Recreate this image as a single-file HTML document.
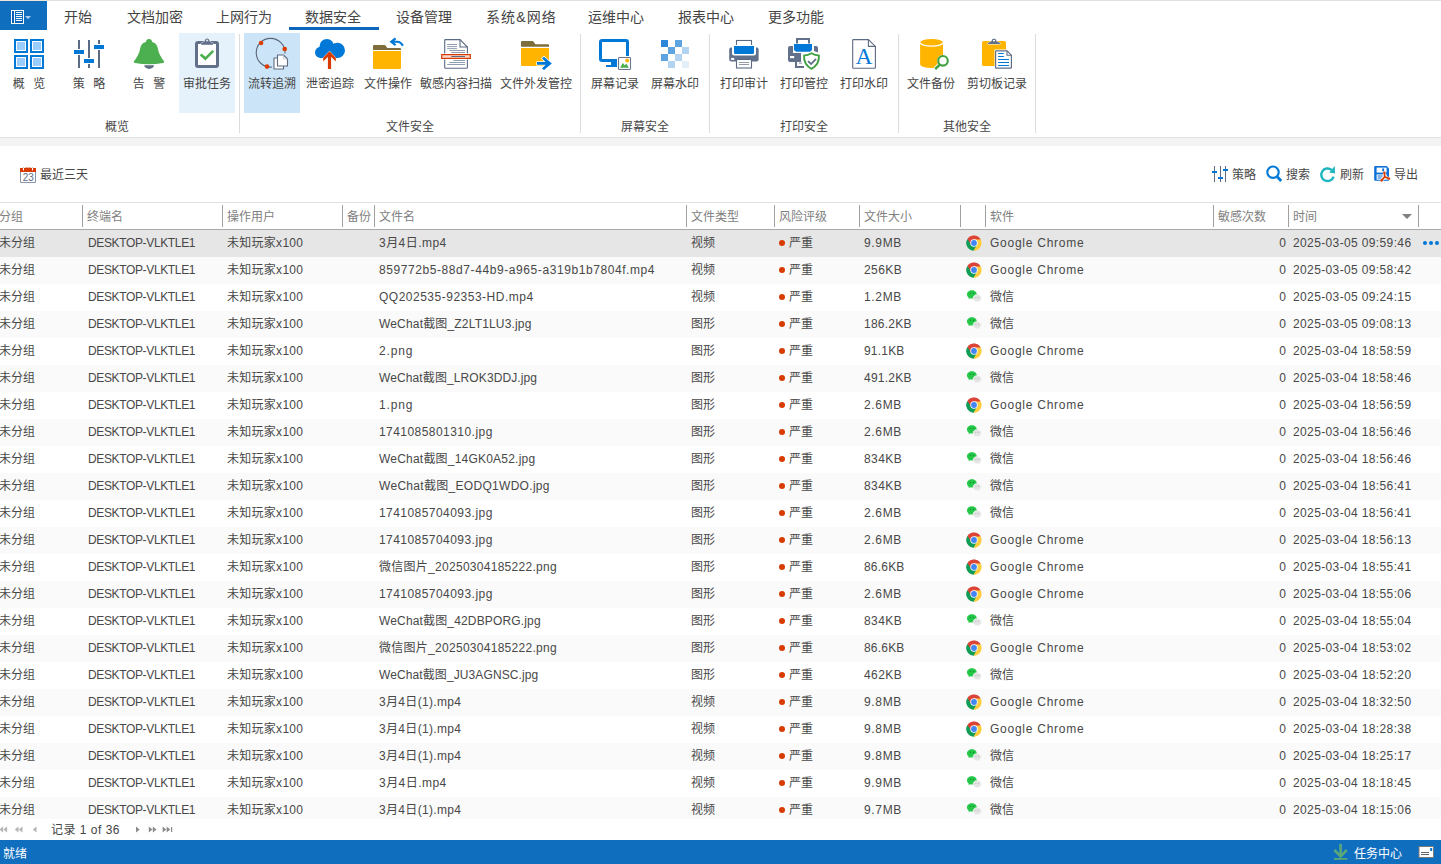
<!DOCTYPE html>
<html lang="zh-CN"><head><meta charset="utf-8"><title>数据安全 - 流转追溯</title>
<style>
*{margin:0;padding:0;box-sizing:border-box}
html,body{width:1441px;height:864px;overflow:hidden;background:#fff}
body{position:relative;font-family:"Liberation Sans","Noto Sans CJK SC",sans-serif;font-size:12px;color:#484848}
i{font-style:normal}
#tabbar{position:absolute;left:0;top:0;width:1441px;height:30px;background:#fff;border-top:1px solid #e1e1e1}
#appbtn{position:absolute;left:0;top:0;width:47px;height:29px;background:#106ebe}
#appbtn svg{position:absolute;left:0;top:0}
.tab{position:absolute;top:1px;height:30px;line-height:30px;font-size:14px;color:#444;white-space:nowrap}
#tabline{position:absolute;left:289px;top:26px;width:90px;height:3px;background:#0b66bd}
#ribbon{position:absolute;left:0;top:30px;width:1441px;height:108px;background:#fff;border-bottom:1px solid #e1e1e1}
#ribsvg{position:absolute;left:0;top:-30px}
.rb{position:absolute;top:3px;height:80px}
.rb.hov{background:#e5f1fb}.rb.sel{background:#cce4f7}
.btn{position:absolute;top:0;width:100px;height:84px;text-align:center}
.btn .lb{position:absolute;left:0;top:45px;width:100px;line-height:18px;font-size:12px;white-space:nowrap;color:#444}
.grp{position:absolute;top:88px;width:100px;text-align:center;line-height:18px;font-size:12px;color:#484848}
.gsep{position:absolute;top:4px;width:1px;height:99px;background:#dcdcdc}
#band{position:absolute;left:0;top:138px;width:1441px;height:8px;background:#f3f3f3}
#toolbar{position:absolute;left:0;top:146px;width:1441px;height:56px;background:#fff}
#tbsvg{position:absolute;left:0;top:0}
.tb{position:absolute;top:20px;height:18px}
.tb span{position:absolute;top:0;line-height:18px;white-space:nowrap;font-size:12px;color:#484848}
#ghead{position:absolute;left:0;top:202px;width:1441px;height:28px;background:#fff;border-top:1px solid #e2e2e2;border-bottom:1px solid #a8a8a8}
.hs{position:absolute;top:2px;width:1px;height:22px;background:#a0a0a0}
.ht{position:absolute;top:5px;line-height:18px;color:#808080;white-space:nowrap}
.sort{position:absolute;left:1402px;top:11px;width:0;height:0;border-left:5px solid transparent;border-right:5px solid transparent;border-top:5px solid #808080}
#gbody{position:absolute;left:0;top:230px;width:1441px;height:589px;overflow:hidden}
.row{position:relative;height:27px;width:1441px;background:#fff}
.row.alt{background:#fafafa}.row.cur{background:#e6e6e6}
.row span{position:absolute;top:4px;line-height:18px;white-space:nowrap}
.row .num{width:69px;text-align:right}
.dot{position:absolute;left:779px;top:10px;width:6px;height:6px;border-radius:3px;background:#d83b01}
.si{position:absolute;left:966px;top:5px}
.more{position:absolute;left:1423px;top:11px;width:18px;height:4px}
.more i{position:absolute;top:0;width:4px;height:4px;border-radius:2px;background:#0078d7}
#pager{position:absolute;left:0;top:819px;width:1441px;height:21px;background:#fff}
#pager svg{position:absolute;left:0;top:0}
.pt{position:absolute;left:51px;top:2px;letter-spacing:.5px;line-height:19px;font-size:12px;color:#444;white-space:nowrap}
#status{position:absolute;left:0;top:840px;width:1441px;height:24px;background:#106ebe;color:#fff}
#status span{position:absolute;top:5px;line-height:18px;font-size:12px;white-space:nowrap}
.st{left:3px}.tk{left:1354px}
#stsvg{position:absolute;left:0;top:0}
.pc{letter-spacing:-.36px}.us{letter-spacing:.28px}.gc{letter-spacing:.75px}.tm{letter-spacing:.37px}
.lb.sp{word-spacing:1px}
#topl{position:absolute;left:0;top:-1px;width:47px;height:1px;background:#f1e4d8}

</style></head>
<body>
<div id="tabbar">
<div id="appbtn"><svg width="47" height="29" viewBox="0 1 47 29">
<rect x="11.5" y="10.5" width="12" height="13" fill="#0a5fb8" stroke="#fff" stroke-width="1"/>
<rect x="14" y="10" width="1" height="14" fill="#fff"/>
<rect x="15" y="11" width="8" height="10" fill="#106ebe"/>
<path d="M16,12.5h6M16,14.5h6M16,16.5h6M16,18.5h6M16,20.5h6" stroke="#fff" stroke-width="1"/>
<path d="M25,16 L31,16 L28,19.2 Z" fill="#a9cdee"/>
</svg></div>
<span class="tab" style="left:64px">开始</span>
<span class="tab" style="left:127px">文档加密</span>
<span class="tab" style="left:216px">上网行为</span>
<span class="tab act" style="left:305px">数据安全</span>
<span class="tab" style="left:396px">设备管理</span>
<span class="tab" style="left:486px;letter-spacing:1.1px">系统&amp;网络</span>
<span class="tab" style="left:588px">运维中心</span>
<span class="tab" style="left:678px">报表中心</span>
<span class="tab" style="left:768px">更多功能</span>
<div id="tabline"></div>
<i id="topl"></i>
</div>
<div id="ribbon">
<div class="rb hov" style="left:179px;width:56px"></div>
<div class="rb sel" style="left:244px;width:56px"></div>
<div class="btn" style="left:-21px"><div class="lb sp">概&nbsp;&nbsp;览</div></div>
<div class="btn" style="left:39px"><div class="lb sp">策&nbsp;&nbsp;略</div></div>
<div class="btn" style="left:99px"><div class="lb sp">告&nbsp;&nbsp;警</div></div>
<div class="btn" style="left:157px"><div class="lb ">审批任务</div></div>
<div class="btn" style="left:222px"><div class="lb ">流转追溯</div></div>
<div class="btn" style="left:280px"><div class="lb ">泄密追踪</div></div>
<div class="btn" style="left:338px"><div class="lb ">文件操作</div></div>
<div class="btn" style="left:406px"><div class="lb ">敏感内容扫描</div></div>
<div class="btn" style="left:486px"><div class="lb ">文件外发管控</div></div>
<div class="btn" style="left:565px"><div class="lb ">屏幕记录</div></div>
<div class="btn" style="left:625px"><div class="lb ">屏幕水印</div></div>
<div class="btn" style="left:694px"><div class="lb ">打印审计</div></div>
<div class="btn" style="left:754px"><div class="lb ">打印管控</div></div>
<div class="btn" style="left:814px"><div class="lb ">打印水印</div></div>
<div class="btn" style="left:881px"><div class="lb ">文件备份</div></div>
<div class="btn" style="left:947px"><div class="lb ">剪切板记录</div></div>
<div class="grp" style="left:67px">概览</div>
<div class="grp" style="left:360px">文件安全</div>
<div class="grp" style="left:595px">屏幕安全</div>
<div class="grp" style="left:754px">打印安全</div>
<div class="grp" style="left:917px">其他安全</div>
<div class="gsep" style="left:239px"></div>
<div class="gsep" style="left:580px"></div>
<div class="gsep" style="left:709px"></div>
<div class="gsep" style="left:898px"></div>
<div class="gsep" style="left:1035px"></div>
<svg id="ribsvg" width="1060" height="137" viewBox="0 0 1060 137">
<rect x="15" y="40" width="12" height="12" fill="#fff" stroke="#0078d7" stroke-width="2"/><rect x="17" y="42" width="8" height="8" fill="#99ccff"/>
<rect x="31" y="40" width="12" height="12" fill="#fff" stroke="#0078d7" stroke-width="2"/><rect x="33" y="42" width="8" height="8" fill="#99ccff"/>
<rect x="15" y="56" width="12" height="12" fill="#fff" stroke="#0078d7" stroke-width="2"/><rect x="17" y="58" width="8" height="8" fill="#99ccff"/>
<rect x="31" y="56" width="12" height="12" fill="#fff" stroke="#0078d7" stroke-width="2"/><rect x="33" y="58" width="8" height="8" fill="#99ccff"/>
<path d="M79,40V49M79,55V68M89,40V58M89,64V68M99,40V44M99,50V68" stroke="#5b6b84" stroke-width="2"/>
<rect x="74" y="50" width="10" height="4" fill="#0078d7"/><rect x="84" y="59" width="10" height="4" fill="#0078d7"/><rect x="94" y="45" width="10" height="4" fill="#0078d7"/>
<path d="M144.3,65.3 H154 A4.85,3.6 0 0 1 144.3,65.3 Z" fill="#5f6f86"/>
<circle cx="149" cy="42" r="3" fill="#4caf50"/>
<path d="M149,41.4 C153.5,41.4 156.8,43.6 157.6,47.5 C158.4,51 159,53.5 160.5,56 Q162,58.8 164.2,61.4 Q164.4,62.6 163,63 Q149,65.4 135,63 Q133.6,62.6 133.8,61.4 Q136,58.8 137.5,56 C139,53.5 139.6,51 140.4,47.5 C141.2,43.6 144.5,41.4 149,41.4 Z" fill="#4caf50"/>
<rect x="196.5" y="42.5" width="21" height="24" rx="1.5" fill="#fff" stroke="#62708a" stroke-width="3"/>
<path d="M201.2,44.7 V43.2 L204.6,41.6 Q204.9,38.4 207.1,38.4 Q209.3,38.4 209.6,41.6 L213,43.2 V44.7 Z" fill="#62708a" stroke="#eef5fc" stroke-width="1" paint-order="stroke"/><rect x="206.1" y="39.7" width="2" height="1.6" fill="#dfe7f1"/>
<path d="M200.6,54.4 L205.4,58.6 L213.2,50.8" fill="none" stroke="#4caf50" stroke-width="2.6"/>
<path d="M271.8,67.1 A14.4,14.4 0 1 1 285.0,53.6" fill="none" stroke="#5a6678" stroke-width="1.1"/>
<circle cx="261.1" cy="43" r="2.3" fill="#dc3c00"/><circle cx="284.7" cy="49" r="2.3" fill="#dc3c00"/><circle cx="267" cy="66.6" r="2.3" fill="#dc3c00"/>
<path d="M274,58 H283.5 V69 H274 Z" fill="#fff" stroke="#5f6b80" stroke-width="1.1" stroke-linejoin="round"/>
<path d="M277.5,55 H283.5 L287.5,59 V66 H277.5 Z" fill="#fff" stroke="#5f6b80" stroke-width="1.1" stroke-linejoin="round"/><path d="M283.5,55 V59 H287.5" fill="none" stroke="#b8c0cc" stroke-width=".8"/>
<circle cx="320.6" cy="52.4" r="5.6" fill="#0078d7"/><circle cx="326.8" cy="46.2" r="7.2" fill="#0078d7"/><circle cx="337.4" cy="50.4" r="7.6" fill="#0078d7"/><rect x="320" y="50" width="18" height="8" fill="#0078d7"/>
<path d="M329.5,51.2 L335.8,57.8 L335.8,61.6 L331.1,56.8 L331.1,69 L327.9,69 L327.9,56.8 L323.2,61.6 L323.2,57.8 Z" fill="#d83b01" stroke="#fff" stroke-width="1" paint-order="stroke"/>
<path d="M373,46 Q373,45 374,45 H384.4 Q385,45 385.5,45.6 L387.3,48 H400 Q401,48 401,49 V50 H373 Z" fill="#7d6e3c"/><path d="M373,51 H401 V68 Q401,69 400,69 H374 Q373,69 373,68 Z" fill="#ffb400"/>
<path d="M395.6,38.4 L391.2,41.8 L395.6,45.2 M391.6,41.8 H397.5 Q400.6,41.8 402.9,45.8" fill="none" stroke="#0078d7" stroke-width="2.1"/>
<path d="M445.4,39.6 H460 L467.4,47 V67.4 Q467.4,68.2 466.6,68.2 H445.4 Q444.7,68.2 444.7,67.4 V40.4 Q444.7,39.6 445.4,39.6 Z" fill="#fff" stroke="#5b6b84" stroke-width="1.1"/><path d="M460,39.6 V47 H467.4" fill="none" stroke="#5b6b84" stroke-width="1.1"/>
<path d="M447.2,44.5H457M447.2,46.6H457M447.2,48.6H457M449.3,50.5H465M451.3,52.5H465M453.4,60.5H465M449.3,62.5H465M447.2,64.5H465" stroke="#8592a6" stroke-width=".9"/>
<rect x="440.6" y="53.5" width="30.8" height="6" fill="#fff"/><rect x="441.7" y="54.6" width="28.6" height="3.8" fill="#f9d6c8" stroke="#d83b01" stroke-width="1.2"/><path d="M451.3,56.5H465" stroke="#5b6b84" stroke-width="1"/>
<path d="M521,42 Q521,41 522,41 H532.4 Q533,41 533.5,41.6 L535.3,44.2 H548 Q549,44.2 549,45.2 V46.8 H521 Z" fill="#7d6e3c"/><path d="M521,48 H549 V65 Q549,66 548,66 H522 Q521,66 521,65 Z" fill="#ffb400"/>
<path d="M537,62 H545.6 L542,58.3 L544,56.7 L551.8,63.4 L544,70.1 L542,68.5 L545.6,64.8 H537 Z" fill="#0078d7" stroke="#fff" stroke-width="1.4" paint-order="stroke"/>
<rect x="600.5" y="40.5" width="27" height="20" rx="1.5" fill="#fff" stroke="#0078d7" stroke-width="3"/><rect x="611" y="61" width="6" height="6" fill="#0078d7"/><rect x="606" y="65" width="11" height="2" fill="#0078d7"/>
<rect x="617" y="56" width="15" height="15" fill="#fff"/><rect x="618.5" y="57.5" width="12" height="12" rx=".8" fill="#fff" stroke="#6b7790" stroke-width="1.1"/>
<circle cx="627.2" cy="60.6" r="2" fill="#ffb400"/><path d="M620,67.8 L622.8,63 L624.7,65.2 L626.3,63.8 L629,67.8 Z" fill="#4caf50"/>
<rect x="661" y="40" width="7" height="7" fill="#2b88d8"/>
<rect x="675" y="40" width="7" height="7" fill="#5ea4e0"/>
<rect x="668" y="47" width="7" height="7" fill="#5ea4e0"/>
<rect x="682" y="47" width="7" height="7" fill="#b3d4f1"/>
<rect x="661" y="54" width="7" height="7" fill="#5ea4e0"/>
<rect x="675" y="54" width="7" height="7" fill="#b3d4f1"/>
<rect x="668" y="61" width="7" height="7" fill="#b3d4f1"/>
<rect x="682" y="61" width="7" height="7" fill="#e3f0fa"/>
<rect x="736.5" y="40.5" width="15" height="8" fill="#fff" stroke="#5b6b84" stroke-width="1.1"/>
<path d="M729.2,49.4 Q729.2,47.6 731,47.6 H757 Q758.6,47.6 758.6,49.4 V59.6 Q758.6,61.4 757,61.4 H731 Q729.2,61.4 729.2,59.6 Z" fill="#62708a"/>
<path d="M732,45 H756 V53.4 Q756,55.4 754,55.4 H734 Q732,55.4 732,53.4 Z" fill="#fff"/><path d="M734,46 H754 V52.4 Q754,54 752.4,54 H735.6 Q734,54 734,52.4 Z" fill="#0078d7"/>
<ellipse cx="732.6" cy="58.9" rx="1.9" ry="1.2" fill="#f2f4f7"/>
<rect x="736.5" y="59.5" width="15" height="8.5" fill="#fff" stroke="#5b6b84" stroke-width="1.1"/><path d="M739,62.5H749M739,64.5H749" stroke="#8592a6" stroke-width=".9"/>
<rect x="797" y="39" width="12" height="7" fill="#fff" stroke="#62708a" stroke-width="2"/>
<path d="M788,48 Q788,46 790,46 H793 V53 H801 V62 H790 Q788,62 788,60 Z" fill="#62708a"/><path d="M814,46 H816 Q818,46 818,48 V52.4 L814,51 Z" fill="#62708a"/>
<path d="M794,44 H812 V50 L810,51.8 H796 L794,50 Z" fill="#0078d7" stroke="#fff" stroke-width="1" paint-order="stroke"/>
<rect x="790" y="56" width="4.2" height="2.2" fill="#fff"/>
<path d="M796,59 V67 H804" fill="none" stroke="#62708a" stroke-width="2"/><path d="M799,63.2H802" stroke="#9aa4b4" stroke-width="1.2"/>
<path d="M811.5,53.3 Q815.5,55.6 818.9,55.4 Q819.6,64.4 811.5,68.8 Q803.4,64.4 804.1,55.4 Q807.5,55.6 811.5,53.3 Z" fill="#fff" stroke="#3fa142" stroke-width="1.9" stroke-linejoin="round"/>
<path d="M808,61.2 L811.1,64 L816,58.8" fill="none" stroke="#62708a" stroke-width="1.8"/>
<path d="M853.4,39.6 H868.4 L875.4,46.4 V67.4 Q875.4,68.2 874.6,68.2 H853.4 Q852.7,68.2 852.7,67.4 V40.4 Q852.7,39.6 853.4,39.6 Z" fill="#fff" stroke="#5b6b84" stroke-width="1.1"/><path d="M868.4,39.6 V46.4 H875.4" fill="none" stroke="#5b6b84" stroke-width="1.1"/>
<text x="864.1" y="63.9" text-anchor="middle" font-family="Liberation Serif,serif" font-size="23.5" fill="#0078d7">A</text>
<path d="M920.1,42.4 V64.6 A11.45,3.5 0 0 0 943,64.6 V42.4 Z" fill="#ffb400"/><ellipse cx="931.55" cy="42.4" rx="11.45" ry="3.5" fill="#ffb400" /><path d="M920.1,42.6 A11.45,3.5 0 0 0 943,42.6" fill="none" stroke="#fff" stroke-width="1.3"/>
<path d="M939.6,64.9 L935.2,69" stroke="#fff" stroke-width="4.4"/><circle cx="943" cy="60.8" r="5.9" fill="#fff"/><path d="M939.6,64.9 L935.2,69" stroke="#3fa142" stroke-width="2.5"/><circle cx="943" cy="60.8" r="4.8" fill="#fff" stroke="#3fa142" stroke-width="2.1"/>
<rect x="982" y="41" width="24" height="25" rx="1.6" fill="#ffb400"/>
<path d="M987.8,44 V43 L991.4,41.3 Q991.8,38.6 994,38.6 Q996.2,38.6 996.6,41.3 L1000.2,43 V44 Z" fill="#62708a" stroke="#fff" stroke-width="1" paint-order="stroke"/><rect x="993" y="39.9" width="2" height="1.4" fill="#fff"/>
<path d="M994.5,49.4 H1007.2 L1012.6,54.8 V69.4 H994.5 Z" fill="#fff"/><path d="M996,50.8 H1007 L1011.4,55.2 V67.4 Q1011.4,68.2 1010.6,68.2 H996 Q995.6,68.2 995.6,67.4 V51.2 Z" fill="#fff" stroke="#62708a" stroke-width="1.2"/><path d="M1007,50.8 V55.2 H1011.4" fill="none" stroke="#62708a" stroke-width="1.1"/>
<path d="M998.1,53.5H1003.8M998.1,56.5H1003.8M998.1,59.5H1009M998.1,62.5H1009M998.1,65.5H1009" stroke="#0078d7" stroke-width="1.1"/>
</svg>
</div>
<div id="band"></div>
<div id="toolbar">
<svg id="tbsvg" width="1441" height="56" viewBox="0 146 1441 56">
<rect x="20" y="168" width="16" height="4.2" fill="#d83b01"/><rect x="25" y="167.6" width="6" height="1" fill="#d83b01"/><path d="M23.5,168V170.4M32.5,168V170.4" stroke="#fff" stroke-width="1"/><path d="M23.5,167V168M32.5,167V168" stroke="#b9c0cb" stroke-width="1"/>
<path d="M20.5,172 V182.5 H35.5 V172" fill="#fff" stroke="#8a96a8" stroke-width="1"/>
<text x="28.3" y="180.7" text-anchor="middle" textLength="11" lengthAdjust="spacingAndGlyphs" font-family="Liberation Sans,sans-serif" font-size="10" fill="#5b6b84">23</text>
<path d="M1214.5,166V182M1220.5,166V182M1225.5,166V182" stroke="#5b6b84" stroke-width="1"/>
<rect x="1212" y="171" width="5" height="2" fill="#0078d7"/><rect x="1218" y="177" width="5" height="2" fill="#0078d7"/><rect x="1223" y="169" width="5" height="2" fill="#0078d7"/>
<circle cx="1273" cy="172.2" r="5.7" fill="none" stroke="#0078d7" stroke-width="2.1"/><path d="M1277.2,176.8 L1281.2,181" stroke="#0078d7" stroke-width="2.7"/>
<path d="M1333.6,176.6 A6.3,6.3 0 1 1 1331.6,169.9" fill="none" stroke="#1fb5c1" stroke-width="2.4"/><path d="M1329.2,172.6 L1335,173.4 L1334.8,166 Z" fill="#1fb5c1"/>
<path d="M1375.2,166 H1386.6 L1389,168.4 V179.8 Q1389,180.7 1388,180.7 H1375.2 Q1374.2,180.7 1374.2,179.8 V167 Q1374.2,166 1375.2,166 Z" fill="#0a6fd6"/><rect x="1376.6" y="167.6" width="10" height="5" fill="#fff"/><rect x="1382.3" y="168.4" width="1.8" height="3" fill="#0a6fd6"/><rect x="1376.6" y="174.4" width="10.2" height="5.3" fill="#fff"/><path d="M1377.6,176H1382.6M1377.6,178H1381.6" stroke="#0a6fd6" stroke-width="1.1"/>
<path d="M1384.4,172.8 L1384.7,176.8 L1381.6,180.4 M1384.7,176.8 L1389,178.6" fill="none" stroke="#fff" stroke-width="2.8" stroke-linecap="round"/><path d="M1384.4,172.8 L1384.7,176.8 L1381.6,180.4 M1384.7,176.8 L1389,178.6" fill="none" stroke="#d83b01" stroke-width="1.7" stroke-linecap="round"/><circle cx="1384.4" cy="172.6" r="1.2" fill="#d83b01"/><circle cx="1381.6" cy="180.4" r="1.2" fill="#d83b01"/><circle cx="1389" cy="178.6" r="1.2" fill="#d83b01"/>
</svg>
<div class="tb" style="left:19px"><span style="left:21px">最近三天</span></div>
<div class="tb" style="left:1211px"><span style="left:21px">策略</span></div>
<div class="tb" style="left:1265px"><span style="left:21px">搜索</span></div>
<div class="tb" style="left:1319px"><span style="left:21px">刷新</span></div>
<div class="tb" style="left:1373px"><span style="left:21px">导出</span></div>
</div>
<div id="ghead">
<span class="ht" style="left:-1px">分组</span>
<i class="hs" style="left:82px"></i><span class="ht" style="left:87px">终端名</span>
<i class="hs" style="left:222px"></i><span class="ht" style="left:227px">操作用户</span>
<i class="hs" style="left:342px"></i><span class="ht" style="left:347px">备份</span>
<i class="hs" style="left:374px"></i><span class="ht" style="left:379px">文件名</span>
<i class="hs" style="left:686px"></i><span class="ht" style="left:691px">文件类型</span>
<i class="hs" style="left:774px"></i><span class="ht" style="left:779px">风险评级</span>
<i class="hs" style="left:859px"></i><span class="ht" style="left:864px">文件大小</span>
<i class="hs" style="left:960px"></i><i class="hs" style="left:985px"></i><span class="ht" style="left:990px">软件</span>
<i class="hs" style="left:1213px"></i><span class="ht" style="left:1218px">敏感次数</span>
<i class="hs" style="left:1288px"></i><span class="ht" style="left:1293px">时间</span>
<i class="hs" style="left:1418px"></i><i class="sort"></i>
</div>
<div id="gbody">
<div class="row cur"><span style="left:-1px">未分组</span><span class="pc" style="left:88px">DESKTOP-VLKTLE1</span><span class="us" style="left:227px">未知玩家x100</span><span style="left:379px;letter-spacing:0.46px">3月4日.mp4</span><span style="left:691px">视频</span><i class="dot"></i><span style="left:789px">严重</span><span style="left:864px;letter-spacing:0.65px">9.9MB</span><svg class="si" width="16" height="16" viewBox="0 0 16 16"><circle cx="8" cy="8" r="7.6" fill="#fff"/><path d="M8,8 L1.42,4.2 A7.6,7.6 0 0 1 14.58,4.2 Z" fill="#db4437"/><path d="M8,8 L14.58,4.2 A7.6,7.6 0 0 1 8,15.6 Z" fill="#ffcd40"/><path d="M8,8 L8,15.6 A7.6,7.6 0 0 1 1.42,4.2 Z" fill="#0f9d58"/><path d="M8,4.6 L14.4,4.6 A7.6,7.6 0 0 0 1.42,4.2 L4.9,9.6 Z" fill="#db4437"/><path d="M11,9.7 L7.6,15.6 A7.6,7.6 0 0 0 14.4,4.6 L8,4.6 Z" fill="#ffcd40"/><path d="M5.05,9.7 L1.42,4.2 A7.6,7.6 0 0 0 7.6,15.6 L11,9.7 Z" fill="#0f9d58"/><circle cx="8" cy="8" r="3.7" fill="#fff"/><circle cx="8" cy="8" r="2.9" fill="#4285f4"/></svg><span class="gc" style="left:990px">Google Chrome</span><span class="num" style="left:1217px">0</span><span class="tm" style="left:1293px">2025-03-05 09:59:46</span><b class="more"><i style="left:0"></i><i style="left:6px"></i><i style="left:12px"></i></b></div>
<div class="row alt"><span style="left:-1px">未分组</span><span class="pc" style="left:88px">DESKTOP-VLKTLE1</span><span class="us" style="left:227px">未知玩家x100</span><span style="left:379px;letter-spacing:0.58px">859772b5-88d7-44b9-a965-a319b1b7804f.mp4</span><span style="left:691px">视频</span><i class="dot"></i><span style="left:789px">严重</span><span style="left:864px;letter-spacing:0.4px">256KB</span><svg class="si" width="16" height="16" viewBox="0 0 16 16"><circle cx="8" cy="8" r="7.6" fill="#fff"/><path d="M8,8 L1.42,4.2 A7.6,7.6 0 0 1 14.58,4.2 Z" fill="#db4437"/><path d="M8,8 L14.58,4.2 A7.6,7.6 0 0 1 8,15.6 Z" fill="#ffcd40"/><path d="M8,8 L8,15.6 A7.6,7.6 0 0 1 1.42,4.2 Z" fill="#0f9d58"/><path d="M8,4.6 L14.4,4.6 A7.6,7.6 0 0 0 1.42,4.2 L4.9,9.6 Z" fill="#db4437"/><path d="M11,9.7 L7.6,15.6 A7.6,7.6 0 0 0 14.4,4.6 L8,4.6 Z" fill="#ffcd40"/><path d="M5.05,9.7 L1.42,4.2 A7.6,7.6 0 0 0 7.6,15.6 L11,9.7 Z" fill="#0f9d58"/><circle cx="8" cy="8" r="3.7" fill="#fff"/><circle cx="8" cy="8" r="2.9" fill="#4285f4"/></svg><span class="gc" style="left:990px">Google Chrome</span><span class="num" style="left:1217px">0</span><span class="tm" style="left:1293px">2025-03-05 09:58:42</span></div>
<div class="row"><span style="left:-1px">未分组</span><span class="pc" style="left:88px">DESKTOP-VLKTLE1</span><span class="us" style="left:227px">未知玩家x100</span><span style="left:379px;letter-spacing:0.5px">QQ202535-92353-HD.mp4</span><span style="left:691px">视频</span><i class="dot"></i><span style="left:789px">严重</span><span style="left:864px;letter-spacing:0.65px">1.2MB</span><svg class="si" width="16" height="16" viewBox="0 0 16 16"><path d="M5.9,1.2 C3.1,1.2 1,3.1 1,5.4 C1,6.8 1.7,7.9 2.9,8.7 L2.5,10.2 L4.2,9.3 C4.8,9.5 5.3,9.6 5.9,9.6 C8.7,9.6 10.8,7.7 10.8,5.4 C10.8,3.1 8.7,1.2 5.9,1.2 Z" fill="#25c748"/><path d="M11.2,5.6 C8.9,5.6 7.1,7.1 7.1,9 C7.1,10.9 8.9,12.4 11.2,12.4 C11.7,12.4 12.1,12.3 12.6,12.2 L13.9,12.9 L13.6,11.7 C14.6,11.1 15.2,10.1 15.2,9 C15.2,7.1 13.4,5.6 11.2,5.6 Z" fill="#e4e4e4" stroke="#f4f4f4" stroke-width=".6"/><circle cx="4.3" cy="4.3" r=".6" fill="#157a2c"/><circle cx="7.4" cy="4.3" r=".6" fill="#157a2c"/><circle cx="9.9" cy="8.3" r=".5" fill="#aaa"/><circle cx="12.4" cy="8.3" r=".5" fill="#aaa"/></svg><span style="left:990px">微信</span><span class="num" style="left:1217px">0</span><span class="tm" style="left:1293px">2025-03-05 09:24:15</span></div>
<div class="row alt"><span style="left:-1px">未分组</span><span class="pc" style="left:88px">DESKTOP-VLKTLE1</span><span class="us" style="left:227px">未知玩家x100</span><span style="left:379px;letter-spacing:0.17px">WeChat截图_Z2LT1LU3.jpg</span><span style="left:691px">图形</span><i class="dot"></i><span style="left:789px">严重</span><span style="left:864px;letter-spacing:0.25px">186.2KB</span><svg class="si" width="16" height="16" viewBox="0 0 16 16"><path d="M5.9,1.2 C3.1,1.2 1,3.1 1,5.4 C1,6.8 1.7,7.9 2.9,8.7 L2.5,10.2 L4.2,9.3 C4.8,9.5 5.3,9.6 5.9,9.6 C8.7,9.6 10.8,7.7 10.8,5.4 C10.8,3.1 8.7,1.2 5.9,1.2 Z" fill="#25c748"/><path d="M11.2,5.6 C8.9,5.6 7.1,7.1 7.1,9 C7.1,10.9 8.9,12.4 11.2,12.4 C11.7,12.4 12.1,12.3 12.6,12.2 L13.9,12.9 L13.6,11.7 C14.6,11.1 15.2,10.1 15.2,9 C15.2,7.1 13.4,5.6 11.2,5.6 Z" fill="#e4e4e4" stroke="#f4f4f4" stroke-width=".6"/><circle cx="4.3" cy="4.3" r=".6" fill="#157a2c"/><circle cx="7.4" cy="4.3" r=".6" fill="#157a2c"/><circle cx="9.9" cy="8.3" r=".5" fill="#aaa"/><circle cx="12.4" cy="8.3" r=".5" fill="#aaa"/></svg><span style="left:990px">微信</span><span class="num" style="left:1217px">0</span><span class="tm" style="left:1293px">2025-03-05 09:08:13</span></div>
<div class="row"><span style="left:-1px">未分组</span><span class="pc" style="left:88px">DESKTOP-VLKTLE1</span><span class="us" style="left:227px">未知玩家x100</span><span style="left:379px;letter-spacing:0.85px">2.png</span><span style="left:691px">图形</span><i class="dot"></i><span style="left:789px">严重</span><span style="left:864px;letter-spacing:0.2px">91.1KB</span><svg class="si" width="16" height="16" viewBox="0 0 16 16"><circle cx="8" cy="8" r="7.6" fill="#fff"/><path d="M8,8 L1.42,4.2 A7.6,7.6 0 0 1 14.58,4.2 Z" fill="#db4437"/><path d="M8,8 L14.58,4.2 A7.6,7.6 0 0 1 8,15.6 Z" fill="#ffcd40"/><path d="M8,8 L8,15.6 A7.6,7.6 0 0 1 1.42,4.2 Z" fill="#0f9d58"/><path d="M8,4.6 L14.4,4.6 A7.6,7.6 0 0 0 1.42,4.2 L4.9,9.6 Z" fill="#db4437"/><path d="M11,9.7 L7.6,15.6 A7.6,7.6 0 0 0 14.4,4.6 L8,4.6 Z" fill="#ffcd40"/><path d="M5.05,9.7 L1.42,4.2 A7.6,7.6 0 0 0 7.6,15.6 L11,9.7 Z" fill="#0f9d58"/><circle cx="8" cy="8" r="3.7" fill="#fff"/><circle cx="8" cy="8" r="2.9" fill="#4285f4"/></svg><span class="gc" style="left:990px">Google Chrome</span><span class="num" style="left:1217px">0</span><span class="tm" style="left:1293px">2025-03-04 18:58:59</span></div>
<div class="row alt"><span style="left:-1px">未分组</span><span class="pc" style="left:88px">DESKTOP-VLKTLE1</span><span class="us" style="left:227px">未知玩家x100</span><span style="left:379px;letter-spacing:0.11px">WeChat截图_LROK3DDJ.jpg</span><span style="left:691px">图形</span><i class="dot"></i><span style="left:789px">严重</span><span style="left:864px;letter-spacing:0.25px">491.2KB</span><svg class="si" width="16" height="16" viewBox="0 0 16 16"><path d="M5.9,1.2 C3.1,1.2 1,3.1 1,5.4 C1,6.8 1.7,7.9 2.9,8.7 L2.5,10.2 L4.2,9.3 C4.8,9.5 5.3,9.6 5.9,9.6 C8.7,9.6 10.8,7.7 10.8,5.4 C10.8,3.1 8.7,1.2 5.9,1.2 Z" fill="#25c748"/><path d="M11.2,5.6 C8.9,5.6 7.1,7.1 7.1,9 C7.1,10.9 8.9,12.4 11.2,12.4 C11.7,12.4 12.1,12.3 12.6,12.2 L13.9,12.9 L13.6,11.7 C14.6,11.1 15.2,10.1 15.2,9 C15.2,7.1 13.4,5.6 11.2,5.6 Z" fill="#e4e4e4" stroke="#f4f4f4" stroke-width=".6"/><circle cx="4.3" cy="4.3" r=".6" fill="#157a2c"/><circle cx="7.4" cy="4.3" r=".6" fill="#157a2c"/><circle cx="9.9" cy="8.3" r=".5" fill="#aaa"/><circle cx="12.4" cy="8.3" r=".5" fill="#aaa"/></svg><span style="left:990px">微信</span><span class="num" style="left:1217px">0</span><span class="tm" style="left:1293px">2025-03-04 18:58:46</span></div>
<div class="row"><span style="left:-1px">未分组</span><span class="pc" style="left:88px">DESKTOP-VLKTLE1</span><span class="us" style="left:227px">未知玩家x100</span><span style="left:379px;letter-spacing:0.85px">1.png</span><span style="left:691px">图形</span><i class="dot"></i><span style="left:789px">严重</span><span style="left:864px;letter-spacing:0.65px">2.6MB</span><svg class="si" width="16" height="16" viewBox="0 0 16 16"><circle cx="8" cy="8" r="7.6" fill="#fff"/><path d="M8,8 L1.42,4.2 A7.6,7.6 0 0 1 14.58,4.2 Z" fill="#db4437"/><path d="M8,8 L14.58,4.2 A7.6,7.6 0 0 1 8,15.6 Z" fill="#ffcd40"/><path d="M8,8 L8,15.6 A7.6,7.6 0 0 1 1.42,4.2 Z" fill="#0f9d58"/><path d="M8,4.6 L14.4,4.6 A7.6,7.6 0 0 0 1.42,4.2 L4.9,9.6 Z" fill="#db4437"/><path d="M11,9.7 L7.6,15.6 A7.6,7.6 0 0 0 14.4,4.6 L8,4.6 Z" fill="#ffcd40"/><path d="M5.05,9.7 L1.42,4.2 A7.6,7.6 0 0 0 7.6,15.6 L11,9.7 Z" fill="#0f9d58"/><circle cx="8" cy="8" r="3.7" fill="#fff"/><circle cx="8" cy="8" r="2.9" fill="#4285f4"/></svg><span class="gc" style="left:990px">Google Chrome</span><span class="num" style="left:1217px">0</span><span class="tm" style="left:1293px">2025-03-04 18:56:59</span></div>
<div class="row alt"><span style="left:-1px">未分组</span><span class="pc" style="left:88px">DESKTOP-VLKTLE1</span><span class="us" style="left:227px">未知玩家x100</span><span style="left:379px;letter-spacing:0.45px">1741085801310.jpg</span><span style="left:691px">图形</span><i class="dot"></i><span style="left:789px">严重</span><span style="left:864px;letter-spacing:0.65px">2.6MB</span><svg class="si" width="16" height="16" viewBox="0 0 16 16"><path d="M5.9,1.2 C3.1,1.2 1,3.1 1,5.4 C1,6.8 1.7,7.9 2.9,8.7 L2.5,10.2 L4.2,9.3 C4.8,9.5 5.3,9.6 5.9,9.6 C8.7,9.6 10.8,7.7 10.8,5.4 C10.8,3.1 8.7,1.2 5.9,1.2 Z" fill="#25c748"/><path d="M11.2,5.6 C8.9,5.6 7.1,7.1 7.1,9 C7.1,10.9 8.9,12.4 11.2,12.4 C11.7,12.4 12.1,12.3 12.6,12.2 L13.9,12.9 L13.6,11.7 C14.6,11.1 15.2,10.1 15.2,9 C15.2,7.1 13.4,5.6 11.2,5.6 Z" fill="#e4e4e4" stroke="#f4f4f4" stroke-width=".6"/><circle cx="4.3" cy="4.3" r=".6" fill="#157a2c"/><circle cx="7.4" cy="4.3" r=".6" fill="#157a2c"/><circle cx="9.9" cy="8.3" r=".5" fill="#aaa"/><circle cx="12.4" cy="8.3" r=".5" fill="#aaa"/></svg><span style="left:990px">微信</span><span class="num" style="left:1217px">0</span><span class="tm" style="left:1293px">2025-03-04 18:56:46</span></div>
<div class="row"><span style="left:-1px">未分组</span><span class="pc" style="left:88px">DESKTOP-VLKTLE1</span><span class="us" style="left:227px">未知玩家x100</span><span style="left:379px;letter-spacing:0.21px">WeChat截图_14GK0A52.jpg</span><span style="left:691px">图形</span><i class="dot"></i><span style="left:789px">严重</span><span style="left:864px;letter-spacing:0.4px">834KB</span><svg class="si" width="16" height="16" viewBox="0 0 16 16"><path d="M5.9,1.2 C3.1,1.2 1,3.1 1,5.4 C1,6.8 1.7,7.9 2.9,8.7 L2.5,10.2 L4.2,9.3 C4.8,9.5 5.3,9.6 5.9,9.6 C8.7,9.6 10.8,7.7 10.8,5.4 C10.8,3.1 8.7,1.2 5.9,1.2 Z" fill="#25c748"/><path d="M11.2,5.6 C8.9,5.6 7.1,7.1 7.1,9 C7.1,10.9 8.9,12.4 11.2,12.4 C11.7,12.4 12.1,12.3 12.6,12.2 L13.9,12.9 L13.6,11.7 C14.6,11.1 15.2,10.1 15.2,9 C15.2,7.1 13.4,5.6 11.2,5.6 Z" fill="#e4e4e4" stroke="#f4f4f4" stroke-width=".6"/><circle cx="4.3" cy="4.3" r=".6" fill="#157a2c"/><circle cx="7.4" cy="4.3" r=".6" fill="#157a2c"/><circle cx="9.9" cy="8.3" r=".5" fill="#aaa"/><circle cx="12.4" cy="8.3" r=".5" fill="#aaa"/></svg><span style="left:990px">微信</span><span class="num" style="left:1217px">0</span><span class="tm" style="left:1293px">2025-03-04 18:56:46</span></div>
<div class="row alt"><span style="left:-1px">未分组</span><span class="pc" style="left:88px">DESKTOP-VLKTLE1</span><span class="us" style="left:227px">未知玩家x100</span><span style="left:379px;letter-spacing:0.3px">WeChat截图_EODQ1WDO.jpg</span><span style="left:691px">图形</span><i class="dot"></i><span style="left:789px">严重</span><span style="left:864px;letter-spacing:0.4px">834KB</span><svg class="si" width="16" height="16" viewBox="0 0 16 16"><path d="M5.9,1.2 C3.1,1.2 1,3.1 1,5.4 C1,6.8 1.7,7.9 2.9,8.7 L2.5,10.2 L4.2,9.3 C4.8,9.5 5.3,9.6 5.9,9.6 C8.7,9.6 10.8,7.7 10.8,5.4 C10.8,3.1 8.7,1.2 5.9,1.2 Z" fill="#25c748"/><path d="M11.2,5.6 C8.9,5.6 7.1,7.1 7.1,9 C7.1,10.9 8.9,12.4 11.2,12.4 C11.7,12.4 12.1,12.3 12.6,12.2 L13.9,12.9 L13.6,11.7 C14.6,11.1 15.2,10.1 15.2,9 C15.2,7.1 13.4,5.6 11.2,5.6 Z" fill="#e4e4e4" stroke="#f4f4f4" stroke-width=".6"/><circle cx="4.3" cy="4.3" r=".6" fill="#157a2c"/><circle cx="7.4" cy="4.3" r=".6" fill="#157a2c"/><circle cx="9.9" cy="8.3" r=".5" fill="#aaa"/><circle cx="12.4" cy="8.3" r=".5" fill="#aaa"/></svg><span style="left:990px">微信</span><span class="num" style="left:1217px">0</span><span class="tm" style="left:1293px">2025-03-04 18:56:41</span></div>
<div class="row"><span style="left:-1px">未分组</span><span class="pc" style="left:88px">DESKTOP-VLKTLE1</span><span class="us" style="left:227px">未知玩家x100</span><span style="left:379px;letter-spacing:0.45px">1741085704093.jpg</span><span style="left:691px">图形</span><i class="dot"></i><span style="left:789px">严重</span><span style="left:864px;letter-spacing:0.65px">2.6MB</span><svg class="si" width="16" height="16" viewBox="0 0 16 16"><path d="M5.9,1.2 C3.1,1.2 1,3.1 1,5.4 C1,6.8 1.7,7.9 2.9,8.7 L2.5,10.2 L4.2,9.3 C4.8,9.5 5.3,9.6 5.9,9.6 C8.7,9.6 10.8,7.7 10.8,5.4 C10.8,3.1 8.7,1.2 5.9,1.2 Z" fill="#25c748"/><path d="M11.2,5.6 C8.9,5.6 7.1,7.1 7.1,9 C7.1,10.9 8.9,12.4 11.2,12.4 C11.7,12.4 12.1,12.3 12.6,12.2 L13.9,12.9 L13.6,11.7 C14.6,11.1 15.2,10.1 15.2,9 C15.2,7.1 13.4,5.6 11.2,5.6 Z" fill="#e4e4e4" stroke="#f4f4f4" stroke-width=".6"/><circle cx="4.3" cy="4.3" r=".6" fill="#157a2c"/><circle cx="7.4" cy="4.3" r=".6" fill="#157a2c"/><circle cx="9.9" cy="8.3" r=".5" fill="#aaa"/><circle cx="12.4" cy="8.3" r=".5" fill="#aaa"/></svg><span style="left:990px">微信</span><span class="num" style="left:1217px">0</span><span class="tm" style="left:1293px">2025-03-04 18:56:41</span></div>
<div class="row alt"><span style="left:-1px">未分组</span><span class="pc" style="left:88px">DESKTOP-VLKTLE1</span><span class="us" style="left:227px">未知玩家x100</span><span style="left:379px;letter-spacing:0.45px">1741085704093.jpg</span><span style="left:691px">图形</span><i class="dot"></i><span style="left:789px">严重</span><span style="left:864px;letter-spacing:0.65px">2.6MB</span><svg class="si" width="16" height="16" viewBox="0 0 16 16"><circle cx="8" cy="8" r="7.6" fill="#fff"/><path d="M8,8 L1.42,4.2 A7.6,7.6 0 0 1 14.58,4.2 Z" fill="#db4437"/><path d="M8,8 L14.58,4.2 A7.6,7.6 0 0 1 8,15.6 Z" fill="#ffcd40"/><path d="M8,8 L8,15.6 A7.6,7.6 0 0 1 1.42,4.2 Z" fill="#0f9d58"/><path d="M8,4.6 L14.4,4.6 A7.6,7.6 0 0 0 1.42,4.2 L4.9,9.6 Z" fill="#db4437"/><path d="M11,9.7 L7.6,15.6 A7.6,7.6 0 0 0 14.4,4.6 L8,4.6 Z" fill="#ffcd40"/><path d="M5.05,9.7 L1.42,4.2 A7.6,7.6 0 0 0 7.6,15.6 L11,9.7 Z" fill="#0f9d58"/><circle cx="8" cy="8" r="3.7" fill="#fff"/><circle cx="8" cy="8" r="2.9" fill="#4285f4"/></svg><span class="gc" style="left:990px">Google Chrome</span><span class="num" style="left:1217px">0</span><span class="tm" style="left:1293px">2025-03-04 18:56:13</span></div>
<div class="row"><span style="left:-1px">未分组</span><span class="pc" style="left:88px">DESKTOP-VLKTLE1</span><span class="us" style="left:227px">未知玩家x100</span><span style="left:379px;letter-spacing:0.28px">微信图片_20250304185222.png</span><span style="left:691px">图形</span><i class="dot"></i><span style="left:789px">严重</span><span style="left:864px;letter-spacing:0.2px">86.6KB</span><svg class="si" width="16" height="16" viewBox="0 0 16 16"><circle cx="8" cy="8" r="7.6" fill="#fff"/><path d="M8,8 L1.42,4.2 A7.6,7.6 0 0 1 14.58,4.2 Z" fill="#db4437"/><path d="M8,8 L14.58,4.2 A7.6,7.6 0 0 1 8,15.6 Z" fill="#ffcd40"/><path d="M8,8 L8,15.6 A7.6,7.6 0 0 1 1.42,4.2 Z" fill="#0f9d58"/><path d="M8,4.6 L14.4,4.6 A7.6,7.6 0 0 0 1.42,4.2 L4.9,9.6 Z" fill="#db4437"/><path d="M11,9.7 L7.6,15.6 A7.6,7.6 0 0 0 14.4,4.6 L8,4.6 Z" fill="#ffcd40"/><path d="M5.05,9.7 L1.42,4.2 A7.6,7.6 0 0 0 7.6,15.6 L11,9.7 Z" fill="#0f9d58"/><circle cx="8" cy="8" r="3.7" fill="#fff"/><circle cx="8" cy="8" r="2.9" fill="#4285f4"/></svg><span class="gc" style="left:990px">Google Chrome</span><span class="num" style="left:1217px">0</span><span class="tm" style="left:1293px">2025-03-04 18:55:41</span></div>
<div class="row alt"><span style="left:-1px">未分组</span><span class="pc" style="left:88px">DESKTOP-VLKTLE1</span><span class="us" style="left:227px">未知玩家x100</span><span style="left:379px;letter-spacing:0.45px">1741085704093.jpg</span><span style="left:691px">图形</span><i class="dot"></i><span style="left:789px">严重</span><span style="left:864px;letter-spacing:0.65px">2.6MB</span><svg class="si" width="16" height="16" viewBox="0 0 16 16"><circle cx="8" cy="8" r="7.6" fill="#fff"/><path d="M8,8 L1.42,4.2 A7.6,7.6 0 0 1 14.58,4.2 Z" fill="#db4437"/><path d="M8,8 L14.58,4.2 A7.6,7.6 0 0 1 8,15.6 Z" fill="#ffcd40"/><path d="M8,8 L8,15.6 A7.6,7.6 0 0 1 1.42,4.2 Z" fill="#0f9d58"/><path d="M8,4.6 L14.4,4.6 A7.6,7.6 0 0 0 1.42,4.2 L4.9,9.6 Z" fill="#db4437"/><path d="M11,9.7 L7.6,15.6 A7.6,7.6 0 0 0 14.4,4.6 L8,4.6 Z" fill="#ffcd40"/><path d="M5.05,9.7 L1.42,4.2 A7.6,7.6 0 0 0 7.6,15.6 L11,9.7 Z" fill="#0f9d58"/><circle cx="8" cy="8" r="3.7" fill="#fff"/><circle cx="8" cy="8" r="2.9" fill="#4285f4"/></svg><span class="gc" style="left:990px">Google Chrome</span><span class="num" style="left:1217px">0</span><span class="tm" style="left:1293px">2025-03-04 18:55:06</span></div>
<div class="row"><span style="left:-1px">未分组</span><span class="pc" style="left:88px">DESKTOP-VLKTLE1</span><span class="us" style="left:227px">未知玩家x100</span><span style="left:379px;letter-spacing:0.155px">WeChat截图_42DBPORG.jpg</span><span style="left:691px">图形</span><i class="dot"></i><span style="left:789px">严重</span><span style="left:864px;letter-spacing:0.4px">834KB</span><svg class="si" width="16" height="16" viewBox="0 0 16 16"><path d="M5.9,1.2 C3.1,1.2 1,3.1 1,5.4 C1,6.8 1.7,7.9 2.9,8.7 L2.5,10.2 L4.2,9.3 C4.8,9.5 5.3,9.6 5.9,9.6 C8.7,9.6 10.8,7.7 10.8,5.4 C10.8,3.1 8.7,1.2 5.9,1.2 Z" fill="#25c748"/><path d="M11.2,5.6 C8.9,5.6 7.1,7.1 7.1,9 C7.1,10.9 8.9,12.4 11.2,12.4 C11.7,12.4 12.1,12.3 12.6,12.2 L13.9,12.9 L13.6,11.7 C14.6,11.1 15.2,10.1 15.2,9 C15.2,7.1 13.4,5.6 11.2,5.6 Z" fill="#e4e4e4" stroke="#f4f4f4" stroke-width=".6"/><circle cx="4.3" cy="4.3" r=".6" fill="#157a2c"/><circle cx="7.4" cy="4.3" r=".6" fill="#157a2c"/><circle cx="9.9" cy="8.3" r=".5" fill="#aaa"/><circle cx="12.4" cy="8.3" r=".5" fill="#aaa"/></svg><span style="left:990px">微信</span><span class="num" style="left:1217px">0</span><span class="tm" style="left:1293px">2025-03-04 18:55:04</span></div>
<div class="row alt"><span style="left:-1px">未分组</span><span class="pc" style="left:88px">DESKTOP-VLKTLE1</span><span class="us" style="left:227px">未知玩家x100</span><span style="left:379px;letter-spacing:0.28px">微信图片_20250304185222.png</span><span style="left:691px">图形</span><i class="dot"></i><span style="left:789px">严重</span><span style="left:864px;letter-spacing:0.2px">86.6KB</span><svg class="si" width="16" height="16" viewBox="0 0 16 16"><circle cx="8" cy="8" r="7.6" fill="#fff"/><path d="M8,8 L1.42,4.2 A7.6,7.6 0 0 1 14.58,4.2 Z" fill="#db4437"/><path d="M8,8 L14.58,4.2 A7.6,7.6 0 0 1 8,15.6 Z" fill="#ffcd40"/><path d="M8,8 L8,15.6 A7.6,7.6 0 0 1 1.42,4.2 Z" fill="#0f9d58"/><path d="M8,4.6 L14.4,4.6 A7.6,7.6 0 0 0 1.42,4.2 L4.9,9.6 Z" fill="#db4437"/><path d="M11,9.7 L7.6,15.6 A7.6,7.6 0 0 0 14.4,4.6 L8,4.6 Z" fill="#ffcd40"/><path d="M5.05,9.7 L1.42,4.2 A7.6,7.6 0 0 0 7.6,15.6 L11,9.7 Z" fill="#0f9d58"/><circle cx="8" cy="8" r="3.7" fill="#fff"/><circle cx="8" cy="8" r="2.9" fill="#4285f4"/></svg><span class="gc" style="left:990px">Google Chrome</span><span class="num" style="left:1217px">0</span><span class="tm" style="left:1293px">2025-03-04 18:53:02</span></div>
<div class="row"><span style="left:-1px">未分组</span><span class="pc" style="left:88px">DESKTOP-VLKTLE1</span><span class="us" style="left:227px">未知玩家x100</span><span style="left:379px;letter-spacing:0.1px">WeChat截图_JU3AGNSC.jpg</span><span style="left:691px">图形</span><i class="dot"></i><span style="left:789px">严重</span><span style="left:864px;letter-spacing:0.4px">462KB</span><svg class="si" width="16" height="16" viewBox="0 0 16 16"><path d="M5.9,1.2 C3.1,1.2 1,3.1 1,5.4 C1,6.8 1.7,7.9 2.9,8.7 L2.5,10.2 L4.2,9.3 C4.8,9.5 5.3,9.6 5.9,9.6 C8.7,9.6 10.8,7.7 10.8,5.4 C10.8,3.1 8.7,1.2 5.9,1.2 Z" fill="#25c748"/><path d="M11.2,5.6 C8.9,5.6 7.1,7.1 7.1,9 C7.1,10.9 8.9,12.4 11.2,12.4 C11.7,12.4 12.1,12.3 12.6,12.2 L13.9,12.9 L13.6,11.7 C14.6,11.1 15.2,10.1 15.2,9 C15.2,7.1 13.4,5.6 11.2,5.6 Z" fill="#e4e4e4" stroke="#f4f4f4" stroke-width=".6"/><circle cx="4.3" cy="4.3" r=".6" fill="#157a2c"/><circle cx="7.4" cy="4.3" r=".6" fill="#157a2c"/><circle cx="9.9" cy="8.3" r=".5" fill="#aaa"/><circle cx="12.4" cy="8.3" r=".5" fill="#aaa"/></svg><span style="left:990px">微信</span><span class="num" style="left:1217px">0</span><span class="tm" style="left:1293px">2025-03-04 18:52:20</span></div>
<div class="row alt"><span style="left:-1px">未分组</span><span class="pc" style="left:88px">DESKTOP-VLKTLE1</span><span class="us" style="left:227px">未知玩家x100</span><span style="left:379px;letter-spacing:0.32px">3月4日(1).mp4</span><span style="left:691px">视频</span><i class="dot"></i><span style="left:789px">严重</span><span style="left:864px;letter-spacing:0.65px">9.8MB</span><svg class="si" width="16" height="16" viewBox="0 0 16 16"><circle cx="8" cy="8" r="7.6" fill="#fff"/><path d="M8,8 L1.42,4.2 A7.6,7.6 0 0 1 14.58,4.2 Z" fill="#db4437"/><path d="M8,8 L14.58,4.2 A7.6,7.6 0 0 1 8,15.6 Z" fill="#ffcd40"/><path d="M8,8 L8,15.6 A7.6,7.6 0 0 1 1.42,4.2 Z" fill="#0f9d58"/><path d="M8,4.6 L14.4,4.6 A7.6,7.6 0 0 0 1.42,4.2 L4.9,9.6 Z" fill="#db4437"/><path d="M11,9.7 L7.6,15.6 A7.6,7.6 0 0 0 14.4,4.6 L8,4.6 Z" fill="#ffcd40"/><path d="M5.05,9.7 L1.42,4.2 A7.6,7.6 0 0 0 7.6,15.6 L11,9.7 Z" fill="#0f9d58"/><circle cx="8" cy="8" r="3.7" fill="#fff"/><circle cx="8" cy="8" r="2.9" fill="#4285f4"/></svg><span class="gc" style="left:990px">Google Chrome</span><span class="num" style="left:1217px">0</span><span class="tm" style="left:1293px">2025-03-04 18:32:50</span></div>
<div class="row"><span style="left:-1px">未分组</span><span class="pc" style="left:88px">DESKTOP-VLKTLE1</span><span class="us" style="left:227px">未知玩家x100</span><span style="left:379px;letter-spacing:0.32px">3月4日(1).mp4</span><span style="left:691px">视频</span><i class="dot"></i><span style="left:789px">严重</span><span style="left:864px;letter-spacing:0.65px">9.8MB</span><svg class="si" width="16" height="16" viewBox="0 0 16 16"><circle cx="8" cy="8" r="7.6" fill="#fff"/><path d="M8,8 L1.42,4.2 A7.6,7.6 0 0 1 14.58,4.2 Z" fill="#db4437"/><path d="M8,8 L14.58,4.2 A7.6,7.6 0 0 1 8,15.6 Z" fill="#ffcd40"/><path d="M8,8 L8,15.6 A7.6,7.6 0 0 1 1.42,4.2 Z" fill="#0f9d58"/><path d="M8,4.6 L14.4,4.6 A7.6,7.6 0 0 0 1.42,4.2 L4.9,9.6 Z" fill="#db4437"/><path d="M11,9.7 L7.6,15.6 A7.6,7.6 0 0 0 14.4,4.6 L8,4.6 Z" fill="#ffcd40"/><path d="M5.05,9.7 L1.42,4.2 A7.6,7.6 0 0 0 7.6,15.6 L11,9.7 Z" fill="#0f9d58"/><circle cx="8" cy="8" r="3.7" fill="#fff"/><circle cx="8" cy="8" r="2.9" fill="#4285f4"/></svg><span class="gc" style="left:990px">Google Chrome</span><span class="num" style="left:1217px">0</span><span class="tm" style="left:1293px">2025-03-04 18:28:38</span></div>
<div class="row alt"><span style="left:-1px">未分组</span><span class="pc" style="left:88px">DESKTOP-VLKTLE1</span><span class="us" style="left:227px">未知玩家x100</span><span style="left:379px;letter-spacing:0.32px">3月4日(1).mp4</span><span style="left:691px">视频</span><i class="dot"></i><span style="left:789px">严重</span><span style="left:864px;letter-spacing:0.65px">9.8MB</span><svg class="si" width="16" height="16" viewBox="0 0 16 16"><path d="M5.9,1.2 C3.1,1.2 1,3.1 1,5.4 C1,6.8 1.7,7.9 2.9,8.7 L2.5,10.2 L4.2,9.3 C4.8,9.5 5.3,9.6 5.9,9.6 C8.7,9.6 10.8,7.7 10.8,5.4 C10.8,3.1 8.7,1.2 5.9,1.2 Z" fill="#25c748"/><path d="M11.2,5.6 C8.9,5.6 7.1,7.1 7.1,9 C7.1,10.9 8.9,12.4 11.2,12.4 C11.7,12.4 12.1,12.3 12.6,12.2 L13.9,12.9 L13.6,11.7 C14.6,11.1 15.2,10.1 15.2,9 C15.2,7.1 13.4,5.6 11.2,5.6 Z" fill="#e4e4e4" stroke="#f4f4f4" stroke-width=".6"/><circle cx="4.3" cy="4.3" r=".6" fill="#157a2c"/><circle cx="7.4" cy="4.3" r=".6" fill="#157a2c"/><circle cx="9.9" cy="8.3" r=".5" fill="#aaa"/><circle cx="12.4" cy="8.3" r=".5" fill="#aaa"/></svg><span style="left:990px">微信</span><span class="num" style="left:1217px">0</span><span class="tm" style="left:1293px">2025-03-04 18:25:17</span></div>
<div class="row"><span style="left:-1px">未分组</span><span class="pc" style="left:88px">DESKTOP-VLKTLE1</span><span class="us" style="left:227px">未知玩家x100</span><span style="left:379px;letter-spacing:0.46px">3月4日.mp4</span><span style="left:691px">视频</span><i class="dot"></i><span style="left:789px">严重</span><span style="left:864px;letter-spacing:0.65px">9.9MB</span><svg class="si" width="16" height="16" viewBox="0 0 16 16"><path d="M5.9,1.2 C3.1,1.2 1,3.1 1,5.4 C1,6.8 1.7,7.9 2.9,8.7 L2.5,10.2 L4.2,9.3 C4.8,9.5 5.3,9.6 5.9,9.6 C8.7,9.6 10.8,7.7 10.8,5.4 C10.8,3.1 8.7,1.2 5.9,1.2 Z" fill="#25c748"/><path d="M11.2,5.6 C8.9,5.6 7.1,7.1 7.1,9 C7.1,10.9 8.9,12.4 11.2,12.4 C11.7,12.4 12.1,12.3 12.6,12.2 L13.9,12.9 L13.6,11.7 C14.6,11.1 15.2,10.1 15.2,9 C15.2,7.1 13.4,5.6 11.2,5.6 Z" fill="#e4e4e4" stroke="#f4f4f4" stroke-width=".6"/><circle cx="4.3" cy="4.3" r=".6" fill="#157a2c"/><circle cx="7.4" cy="4.3" r=".6" fill="#157a2c"/><circle cx="9.9" cy="8.3" r=".5" fill="#aaa"/><circle cx="12.4" cy="8.3" r=".5" fill="#aaa"/></svg><span style="left:990px">微信</span><span class="num" style="left:1217px">0</span><span class="tm" style="left:1293px">2025-03-04 18:18:45</span></div>
<div class="row alt"><span style="left:-1px">未分组</span><span class="pc" style="left:88px">DESKTOP-VLKTLE1</span><span class="us" style="left:227px">未知玩家x100</span><span style="left:379px;letter-spacing:0.32px">3月4日(1).mp4</span><span style="left:691px">视频</span><i class="dot"></i><span style="left:789px">严重</span><span style="left:864px;letter-spacing:0.65px">9.7MB</span><svg class="si" width="16" height="16" viewBox="0 0 16 16"><path d="M5.9,1.2 C3.1,1.2 1,3.1 1,5.4 C1,6.8 1.7,7.9 2.9,8.7 L2.5,10.2 L4.2,9.3 C4.8,9.5 5.3,9.6 5.9,9.6 C8.7,9.6 10.8,7.7 10.8,5.4 C10.8,3.1 8.7,1.2 5.9,1.2 Z" fill="#25c748"/><path d="M11.2,5.6 C8.9,5.6 7.1,7.1 7.1,9 C7.1,10.9 8.9,12.4 11.2,12.4 C11.7,12.4 12.1,12.3 12.6,12.2 L13.9,12.9 L13.6,11.7 C14.6,11.1 15.2,10.1 15.2,9 C15.2,7.1 13.4,5.6 11.2,5.6 Z" fill="#e4e4e4" stroke="#f4f4f4" stroke-width=".6"/><circle cx="4.3" cy="4.3" r=".6" fill="#157a2c"/><circle cx="7.4" cy="4.3" r=".6" fill="#157a2c"/><circle cx="9.9" cy="8.3" r=".5" fill="#aaa"/><circle cx="12.4" cy="8.3" r=".5" fill="#aaa"/></svg><span style="left:990px">微信</span><span class="num" style="left:1217px">0</span><span class="tm" style="left:1293px">2025-03-04 18:15:06</span></div>
</div>
<div id="pager"><svg width="200" height="21" viewBox="0 819 200 21"><path d="M3.1,826.4 L-0.6,829.5 L3.1,832.6 Z" fill="#b4b4b4"/><path d="M7.1,826.4 L3.4,829.5 L7.1,832.6 Z" fill="#b4b4b4"/><path d="M18.5,826.4 L14.8,829.5 L18.5,832.6 Z" fill="#b4b4b4"/><path d="M22.5,826.4 L18.8,829.5 L22.5,832.6 Z" fill="#b4b4b4"/><path d="M36.5,826.4 L32.8,829.5 L36.5,832.6 Z" fill="#b4b4b4"/><path d="M136.0,826.4 L139.7,829.5 L136.0,832.6 Z" fill="#8a8a8a"/><path d="M148.8,826.4 L152.5,829.5 L148.8,832.6 Z" fill="#8a8a8a"/><path d="M152.8,826.4 L156.5,829.5 L152.8,832.6 Z" fill="#8a8a8a"/><path d="M162.6,826.4 L166.3,829.5 L162.6,832.6 Z" fill="#8a8a8a"/><path d="M166.6,826.4 L170.3,829.5 L166.6,832.6 Z" fill="#8a8a8a"/><rect x="171" y="827" width="1.2" height="5" fill="#8a8a8a"/></svg><span class="pt">记录 1 of 36</span></div>
<div id="status"><span class="st">就绪</span><span class="tk">任务中心</span><svg id="stsvg" width="1441" height="24" viewBox="0 840 1441 24">
<path d="M1340.6,843.8 V856" stroke="#5aa87a" stroke-width="2.6"/><path d="M1334.4,850 L1340.6,856.4 L1346.8,850" fill="none" stroke="#5aa87a" stroke-width="2.6"/><rect x="1334" y="858" width="13.2" height="1.8" fill="#5aa87a"/>
<rect x="1419" y="846.5" width="14.5" height="11" fill="#fff" stroke="#7a7a7a" stroke-width="1"/><rect x="1430.2" y="848" width="2" height="3" fill="#0078d7"/><path d="M1421,852.5H1429M1421,854.5H1429" stroke="#666" stroke-width="1"/>
</svg></div>
</body></html>
